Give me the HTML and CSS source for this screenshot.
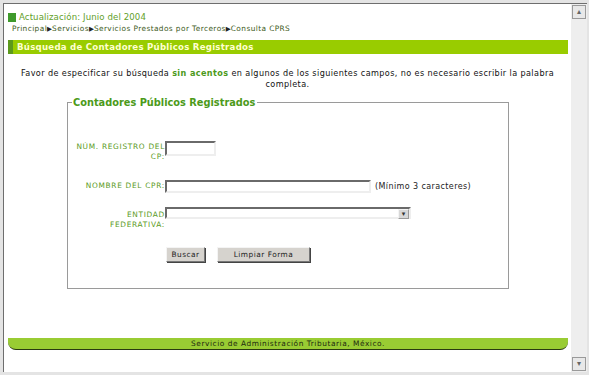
FILE: index.html
```html
<!DOCTYPE html>
<html lang="es">
<head>
  <meta charset="UTF-8">
  <title>Consulta CPRS - SAT</title>
  <link rel="stylesheet" href="styles.css">
</head>
<body>
  <div class="window">
    <div class="page">
      <div class="header">
        <div class="update"><span class="square"></span>Actualización: Junio del 2004</div>
        <div class="crumbs">Principal<span class="arrow">&#9654;</span>Servicios<span class="arrow">&#9654;</span>Servicios Prestados por Terceros<span class="arrow">&#9654;</span>Consulta CPRS</div>
      </div>

      <div class="titlebar"><span class="mark"></span>Búsqueda de Contadores Públicos Registrados</div>

      <p class="intro">Favor de especificar su búsqueda <b>sin acentos</b> en algunos de los siguientes campos, no es necesario escribir la palabra completa.</p>

      <fieldset class="search">
        <legend>Contadores Públicos Registrados</legend>
        <div class="row row-reg">
          <label class="lbl">NÚM. REGISTRO DEL CP:</label>
          <input class="field field-reg" type="text">
        </div>
        <div class="row row-name">
          <label class="lbl">NOMBRE DEL CPR:</label>
          <input class="field field-name" type="text">
          <span class="hint">(Mínimo 3 caracteres)</span>
        </div>
        <div class="row row-state">
          <label class="lbl">ENTIDAD FEDERATIVA:</label>
          <div class="select"><span class="drop">&#9662;</span></div>
        </div>
        <div class="buttons">
          <button class="btn btn-find">Buscar</button>
          <button class="btn btn-clear">Limpiar Forma</button>
        </div>
      </fieldset>

      <div class="footer">Servicio de Administración Tributaria, México.</div>
    </div>
    <div class="scrollbar">
      <div class="sbtn">&#9652;</div>
      <div class="track"></div>
      <div class="sbtn">&#9662;</div>
    </div>
  </div>
</body>
</html>
```

FILE: styles.css
```css
html, body {
  margin: 0;
  padding: 0;
}
body {
  font-family: "DejaVu Sans", Verdana, sans-serif;
  background-color: #e4e4e4;
}
.window {
  width: 589px;
  height: 375px;
  box-sizing: border-box;
  padding: 3px 2px 3px 3px;
  display: flex;
  background-color: #e4e4e4;
}
.page {
  flex: 1;
  position: relative;
  background-color: #ffffff;
  border-top: 1px solid #6e6e6e;
  border-left: 1px solid #6e6e6e;
  overflow: hidden;
}
.scrollbar {
  width: 16px;
  display: flex;
  flex-direction: column;
  background-color: #eeeeee;
  border-top: 1px solid #6e6e6e;
}
.sbtn {
  height: 14px;
  margin: 1px;
  box-sizing: border-box;
  border: 1px solid #9a9a9a;
  background-color: #e8e8e8;
  color: #666666;
  font-size: 8px;
  line-height: 12px;
  text-align: center;
}
.track {
  flex: 1;
}

.header {
  padding: 8px 0 0 4px;
}
.update {
  display: flex;
  align-items: center;
  font-size: 8.6px;
  letter-spacing: 0.1px;
  color: #62a02a;
  height: 10px;
}
.square {
  width: 8px;
  height: 9px;
  background-color: #3f9a2c;
  margin-right: 3px;
}
.crumbs {
  margin-top: 2px;
  padding-left: 4px;
  font-size: 7.4px;
  letter-spacing: 0.4px;
  color: #3d5a1a;
  height: 10px;
  line-height: 10px;
}
.arrow {
  font-size: 6.5px;
  letter-spacing: 0;
  color: #222222;
}

.titlebar {
  margin: 6px 3px 0 4px;
  height: 14px;
  background-color: #99cc00;
  display: flex;
  align-items: center;
  color: #ffffd0;
  font-weight: bold;
  font-size: 8.6px;
  letter-spacing: 0.25px;
}
.mark {
  width: 5px;
  height: 14px;
  background-color: #5c9a1c;
  margin-right: 4px;
}

.intro {
  margin: 14px 10px 0 10px;
  text-align: center;
  font-size: 8.1px;
  letter-spacing: 0.4px;
  line-height: 11px;
  color: #111111;
}
.intro b {
  color: #4c9a1a;
}

.search {
  width: 442px;
  box-sizing: border-box;
  margin: 7px auto 0 63px;
  padding: 33px 0 26px 0;
  border: 1px solid #9a9a9a;
}
.search legend {
  margin-left: 4px;
  padding: 0 2px 0 1px;
  font-size: 9.8px;
  font-weight: bold;
  color: #4c9a1a;
}
.row {
  display: flex;
  align-items: flex-start;
}
.lbl {
  width: 90px;
  margin-left: 7px;
  text-align: right;
  font-size: 7.4px;
  letter-spacing: 0.7px;
  line-height: 10px;
  color: #5a9a24;
}
.row-reg {
  height: 37px;
}
.row-reg .lbl {
  padding-top: 1px;
}
.row-name {
  height: 29px;
}
.row-name .lbl {
  padding-top: 3px;
}
.row-state {
  height: 40px;
}
.row-state .lbl {
  padding-top: 3px;
}
.field {
  margin: 0;
  padding: 0;
  box-sizing: border-box;
  border: 2px solid #eeeeee;
  border-top-color: #6a6a6a;
  border-left-color: #6a6a6a;
  background-color: #ffffff;
}
.field-reg {
  width: 51px;
  height: 15px;
}
.field-name {
  width: 206px;
  height: 13px;
  margin-top: 2px;
}
.hint {
  margin-left: 4px;
  font-size: 8px;
  letter-spacing: 0.4px;
  color: #222222;
  line-height: 17px;
}
.select {
  width: 246px;
  height: 12px;
  box-sizing: border-box;
  border: 2px solid #eeeeee;
  border-top-color: #6a6a6a;
  border-left-color: #6a6a6a;
  display: flex;
  justify-content: flex-end;
}
.drop {
  width: 9px;
  height: 8px;
  background-color: #d8d8d8;
  border: 1px solid #9a9a9a;
  border-top-color: #f4f4f4;
  border-left-color: #f4f4f4;
  font-size: 7px;
  line-height: 8px;
  text-align: center;
  color: #333333;
}
.buttons {
  display: flex;
  gap: 12px;
  padding-left: 98px;
}
.btn {
  height: 15px;
  padding: 0;
  font-family: "DejaVu Sans", Verdana, sans-serif;
  font-size: 7.4px;
  letter-spacing: 0.5px;
  color: #222222;
  background-color: #d6d3ce;
  border: 1px solid #777777;
  border-top-color: #f4f4f4;
  border-left-color: #f4f4f4;
  box-shadow: 1px 1px 0 #444444;
}
.btn-find {
  width: 39px;
}
.btn-clear {
  width: 93px;
}

.footer {
  position: absolute;
  left: 4px;
  right: 3px;
  top: 334px;
  height: 11px;
  background-color: #99cc33;
  border-bottom: 1px solid #2a3a10;
  border-radius: 0 0 8px 8px;
  text-align: center;
  font-size: 7.4px;
  letter-spacing: 0.55px;
  line-height: 11px;
  color: #1e2a10;
}
```
